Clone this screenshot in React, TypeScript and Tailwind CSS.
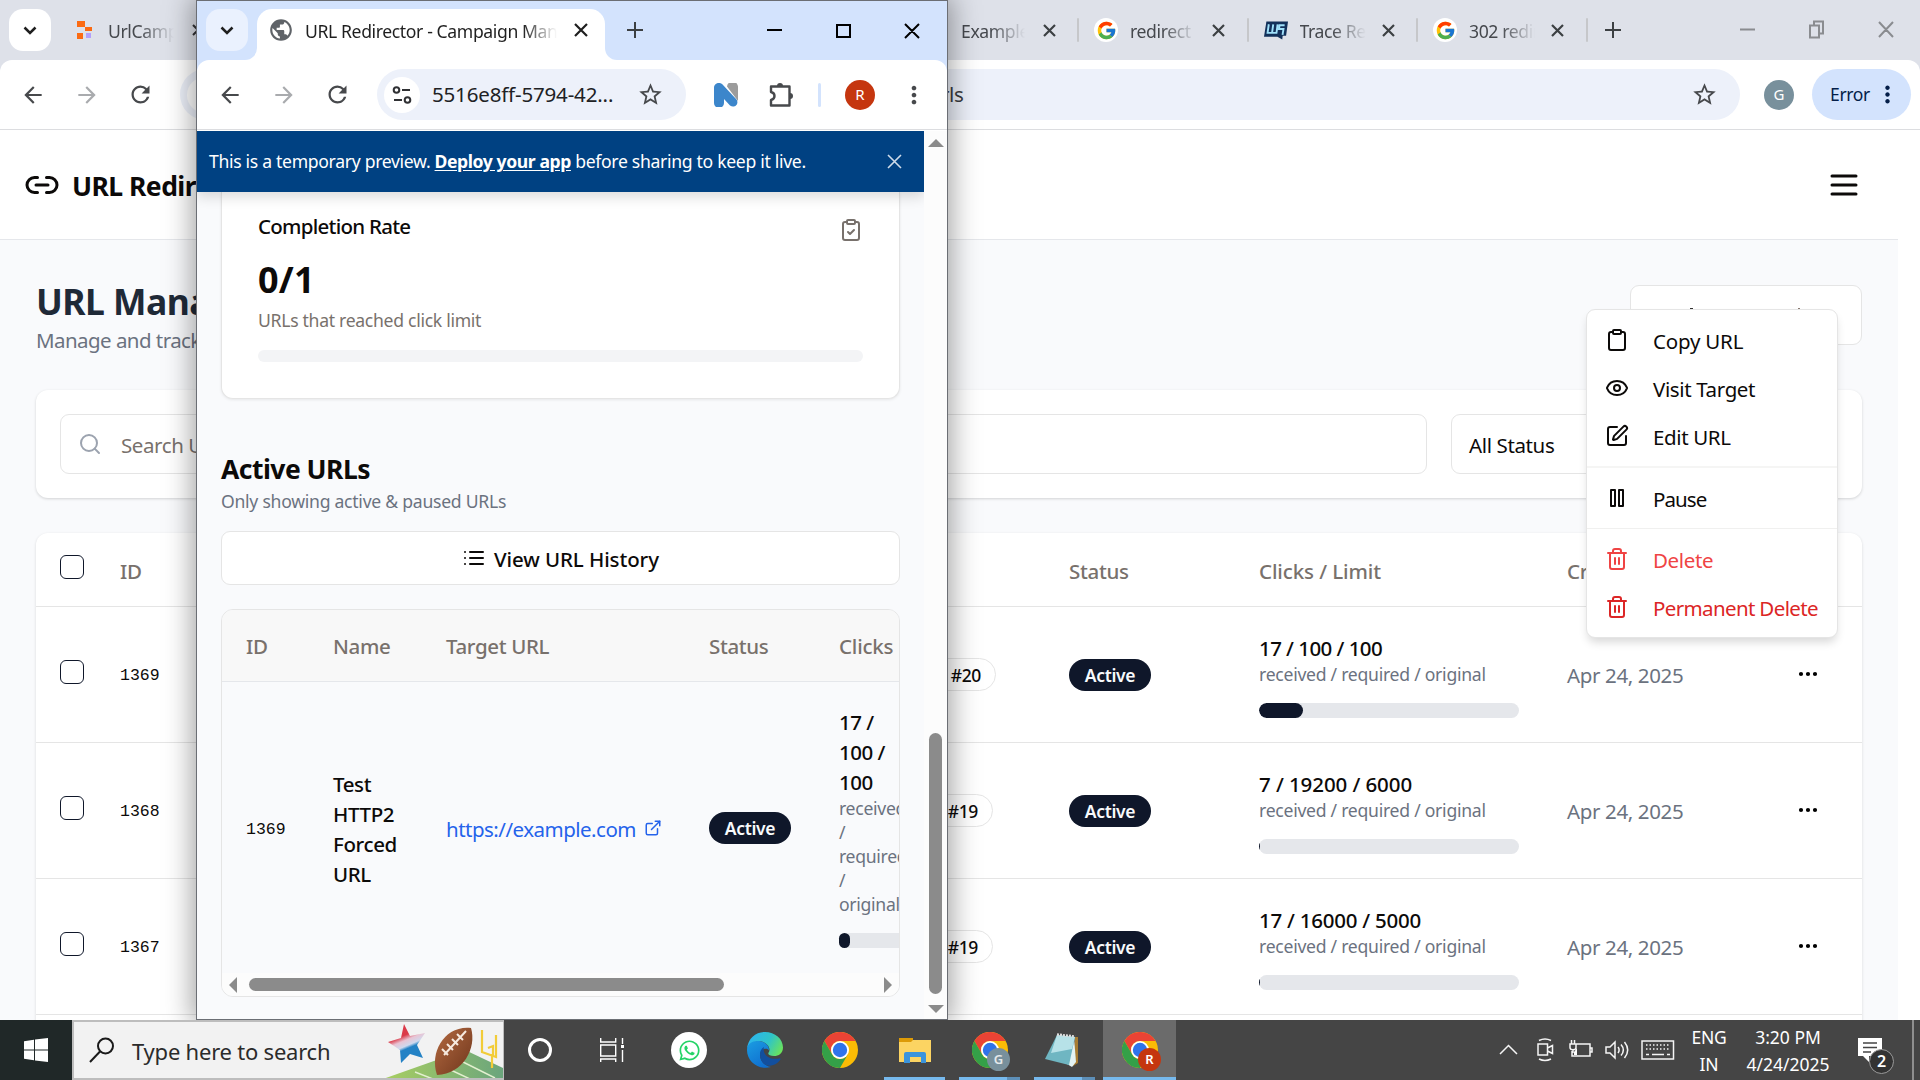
import React from 'react';
import { Clipboard, ClipboardCheck, Ellipsis, ExternalLink, Eye, Link2, Search, SquarePen, Trash2 } from 'lucide-react';
import { FcGoogle } from 'react-icons/fc';
import { FaWhatsapp } from 'react-icons/fa';
import { MdArrowBack, MdArrowForward, MdMoreVert, MdPublic, MdRefresh, MdStarBorder } from 'react-icons/md';

const TABS = [
  { title: 'redirect', icon: 'google' },
  { title: 'Trace Re', icon: 'trace' },
  { title: '302 redir', icon: 'google' },
];

const ROWS = [
  { id: '1369', tag: '#20', tagWidth: 'w-[66px]', clicks: '17 / 100 / 100', tracking: 'tracking-[-0.027em]', fill: 'rounded-full', pct: 17 },
  { id: '1368', tag: '#19', tagWidth: 'w-[63px]', clicks: '7 / 19200 / 6000', tracking: 'tracking-[-0.004em]', fill: '', pct: 0.4 },
  { id: '1367', tag: '#19', tagWidth: 'w-[63px]', clicks: '17 / 16000 / 5000', tracking: 'tracking-[-0.012em]', fill: '', pct: 0.4 },
];

function Cross({ size = 12, stroke = 2, className = '' }: { size?: number; stroke?: number; className?: string }) {
  return (
    <svg width={size} height={size} viewBox={`0 0 ${size} ${size}`} stroke="currentColor" strokeWidth={stroke} className={`shrink-0 ${className}`}>
      <path d={`M1 1L${size - 1} ${size - 1}M${size - 1} 1L1 ${size - 1}`} />
    </svg>
  );
}

function Plus({ className = '' }: { className?: string }) {
  return (
    <svg width="16" height="16" stroke="#3c4043" strokeWidth="2" className={className}>
      <path d="M8 0v16M0 8h16" />
    </svg>
  );
}

function Chevron() {
  return (
    <svg width="14" height="9" fill="none" stroke="#1f1f1f" strokeWidth="2.500">
      <path d="M1.500 1.500L7 7l5.500-5.500" />
    </svg>
  );
}

function TabTitle({ children, className }: { children: React.ReactNode; className: string }) {
  return (
    <span className={`block shrink-0 overflow-hidden whitespace-nowrap text-[17.6px] leading-6 tracking-[-0.022em] [mask-image:linear-gradient(to_right,black_calc(100%-34px),transparent)] ${className}`}>
      {children}
    </span>
  );
}

function TuneIcon() {
  return (
    <svg width="20" height="20" fill="none" stroke="#303134" strokeWidth="2">
      <circle cx="4.500" cy="5" r="2.800" />
      <path d="M10 5h8M2 15h8" />
      <circle cx="15.500" cy="15" r="2.800" />
    </svg>
  );
}

function NavIcons() {
  return (
    <>
      <MdArrowBack size={26} className="text-[#47494c]" />
      <MdArrowForward size={26} className="ml-[28px] text-[#a9abae]" />
      <MdRefresh size={27} className="ml-[27px] text-[#47494c]" />
    </>
  );
}

function PuzzleIcon() {
  return (
    <svg width="26" height="26" fill="none" stroke="#47494c" strokeWidth="2.400" strokeLinejoin="round">
      <path d="M3 4.500h18.500v19H3v-5.500c2-.5 3.500-2 3.500-4s-1.500-3.500-3.500-4z" />
      <path d="M9 4a3 3 0 0 1 6 0zM22 11a3 3 0 0 1 0 6z" fill="#47494c" stroke="none" />
    </svg>
  );
}

function TraceIcon() {
  return (
    <svg width="25" height="19" viewBox="0 0 25 19">
      <path d="M2.500 0H25l-2 15h-3.500l-.5 4-5-3H0z" fill="#12305a" />
      <path d="M5 3l-1.300 9H13l1.200-9M9.600 3l-1.200 9M21.500 4h-5.300l-.6 4h4.700l-1 6" fill="none" stroke="#9fe0fa" strokeWidth="2" />
    </svg>
  );
}

function ActiveBadge() {
  return (
    <span className="flex h-8 w-[82px] items-center justify-center rounded-full bg-[#0f172a] pt-px text-[17.500px] font-semibold tracking-[-0.02em] text-[#f8fafc]">
      Active
    </span>
  );
}

function Checkbox() {
  return <span className="-mt-[5px] block size-6 rounded-[6px] border-[1.500px] border-[#0f172a]" />;
}

/* ---------- Background browser window ---------- */

function BackgroundChrome() {
  return (
    <div className="shrink-0 bg-[#dee1e9]">
      <div className="flex h-[60px] items-center">
        <div className="ml-[9px] flex h-[42px] w-[42px] items-center justify-center rounded-[14px] bg-white">
          <Chevron />
        </div>
        <svg width="15" height="19" className="ml-[26px] shrink-0">
          <path d="M0 0h8v6H0zM8 6h7v4H8zM0 12h6v6H0z" fill="#fb6a12" />
          <path d="M9 12h5v5H9z" fill="#b3a0fa" />
        </svg>
        <TabTitle className="ml-4 mt-[2px] w-[66px] text-[#45484d]">UrlCampaign</TabTitle>
        <Cross className="ml-[18px] text-[#303134]" />
        <div className="w-[757px]" />
        <TabTitle className="mt-[2px] w-[64px] text-[#45484d]">Example D</TabTitle>
        <Cross size={13} stroke={2.200} className="ml-[18px] text-[#3c4043]" />
        {TABS.map((tab) => (
          <div key={tab.title} className="flex w-[169.500px] shrink-0 items-center">
            <span className="ml-[21px] h-6 w-[2px] rounded-full bg-[#c6c7ca]" />
            {tab.icon === 'google' ? (
              <span className="ml-[15px] flex size-6 shrink-0 items-center justify-center rounded-full bg-white">
                <FcGoogle size={21} />
              </span>
            ) : (
              <span className="ml-[15px] flex w-6"><TraceIcon /></span>
            )}
            <TabTitle className="ml-[12px] mt-[2px] w-[66px] text-[#45484d]">{tab.title}</TabTitle>
            <Cross size={13} stroke={2.200} className="ml-[16px] text-[#3c4043]" />
          </div>
        ))}
        <span className="ml-[21px] h-6 w-[2px] rounded-full bg-[#c6c7ca]" />
        <Plus className="ml-[17px]" />
        <svg width="160" height="20" fill="none" stroke="#8a8c90" strokeWidth="2" className="ml-auto mr-[24px] shrink-0">
          <path d="M4 9.500h15M74 5.500h9v12h-9zM78 5V1.500h9v12h-3.500M143 2l14 15M157 2l-14 15" />
        </svg>
      </div>
      <div className="flex h-[70px] items-center rounded-t-[12px] border-b border-[#dcdde0] bg-white pl-5 pr-[9px]">
        <NavIcons />
        <div className="ml-[26px] flex h-[51px] w-[1560px] shrink-0 items-center rounded-full bg-[#edf1fa] px-[7px]">
          <span className="size-9 rounded-full bg-white" />
          <span className="ml-[718px] text-[20.500px] tracking-[-0.02em] text-[#3a3c40]">rls</span>
          <MdStarBorder size={27} className="ml-auto mr-[15px] text-[#47494c]" />
        </div>
        <span className="ml-6 flex size-[30px] items-center justify-center rounded-full bg-[#78909c] text-[15px] text-white">G</span>
        <div className="ml-auto flex h-[51px] w-[99px] items-center rounded-full bg-[#d3e3fd] pl-[18px] text-[#041e49]">
          <span className="text-[17.500px] tracking-[-0.02em]">Error</span>
          <MdMoreVert size={27} className="ml-[4px]" />
        </div>
      </div>
    </div>
  );
}

function UrlTable() {
  return (
    <section className="mt-[35px] h-[600px] rounded-[12px] bg-white shadow-[0_1px_3px_rgba(0,0,0,0.14)]">
      <div className="grid h-[74px] grid-cols-[60px_949px_190px_308px_231px_60px] items-center border-b border-[#e5e5e5] pl-6 text-[20.500px] font-medium tracking-[-0.015em] text-[#78716c]">
        <Checkbox />
        <span className="pt-[4px]">ID</span>
        <span className="pt-[4px]">Status</span>
        <span className="pt-[4px] tracking-[-0.005em]">Clicks / Limit</span>
        <span className="pt-[4px]">Created</span>
      </div>
      {ROWS.map((row) => (
        <div key={row.id} className="grid h-[136px] grid-cols-[60px_810px_139px_190px_308px_231px_60px] items-center border-b border-[#e5e5e5] pl-6">
          <Checkbox />
          <span className="pt-[3px] font-['Liberation_Mono',monospace] text-[16.500px] text-[#0c0a09]">{row.id}</span>
          <span className={`flex h-[33px] items-center justify-end rounded-full border border-[#e5e5e5] pr-[14px] pt-px text-[17.500px] font-medium tracking-[-0.02em] text-[#0c0a09] ${row.tagWidth}`}>
            {row.tag}
          </span>
          <ActiveBadge />
          <div className="pt-[3px] text-[#0c0a09]">
            <div className={`-mt-[2px] text-[20.500px] font-medium leading-[30px] ${row.tracking}`}>{row.clicks}</div>
            <div className="-mt-[1px] text-[17.600px] leading-6 tracking-[-0.015em] text-[#6b7280]">received / required / original</div>
            <div className="mt-[17px] h-[15px] w-[260px] overflow-hidden rounded-full bg-[#e5e7eb]">
              <div className={`h-full min-w-px bg-[#0f172a] ${row.fill}`} style={{ width: `${row.pct}%` }} />
            </div>
          </div>
          <span className="pt-[2px] text-[20.500px] tracking-[-0.018em] text-[#6b7280]">Apr 24, 2025</span>
          <Ellipsis size={24} strokeWidth={2.200} className="-ml-[2px] -mt-[2px]" />
        </div>
      ))}
    </section>
  );
}

function BackgroundPage() {
  return (
    <div className="flex min-h-0 grow flex-col bg-white">
      <header className="flex h-[109px] w-full shrink-0 items-center pl-6 pr-[58px]">
        <Link2 size={36} className="mt-px text-[#0c0a09]" />
        <span className="ml-3 mt-[5px] whitespace-nowrap text-[26.500px] font-bold tracking-[-0.02em] text-[#0c0a09]">URL Redirector</span>
        <svg width="36" height="36" viewBox="0 0 24 24" stroke="#0c0a09" strokeWidth="2" strokeLinecap="round" className="ml-auto mt-px">
          <path d="M4 6h16M4 12h16M4 18h16" />
        </svg>
      </header>
      <main className="w-[1898px] grow overflow-hidden border-t border-[#e5e7eb] bg-[#f9fafc] pl-9 pr-9 pt-[45px]">
        <div className="flex h-[70px] justify-between">
          <div>
            <h1 className="-mt-1 text-[35.500px] font-bold leading-10 tracking-[-0.015em] text-[#1f2937]">URL Management</h1>
            <p className="mt-[4px] text-[20.500px] leading-[30px] tracking-[-0.027em] text-[#6b7280]">Manage and track all your redirect URLs</p>
          </div>
          <div className="h-[60px] w-[232px] rounded-[9px] border border-[#e5e5e5] bg-white">
            <div className="mt-[22px] flex justify-between pl-[59px] pr-[61px]">
              <span className="h-[2px] w-[3px] bg-[#333]" />
              <span className="h-[2px] w-[2px] bg-[#8a7a70]" />
            </div>
          </div>
        </div>
        <section className="mt-[35px] flex h-[108px] items-center gap-[24px] rounded-[12px] bg-white px-6 shadow-[0_1px_3px_rgba(0,0,0,0.16)]">
          <div className="flex h-[60px] w-[1367px] items-center rounded-[9px] border border-[#e5e5e5] pl-[17px] text-[20.500px] tracking-[-0.02em] text-[#78716c]">
            <Search size={24} className="text-[#9ca3af]" />
            <span className="ml-[19px] mt-[2px]">Search URLs...</span>
          </div>
          <div className="flex h-[60px] grow items-center rounded-[9px] border border-[#e5e5e5] pl-[17px] pt-[2px] text-[20.500px] tracking-[-0.018em] text-[#0c0a09]">
            All Status
          </div>
        </section>
        <UrlTable />
      </main>
    </div>
  );
}

function MenuItem({ icon, label, className = 'text-[#0c0a09]' }: { icon: React.ReactNode; label: string; className?: string }) {
  return (
    <div className={`flex h-12 items-center gap-6 whitespace-nowrap pl-[18px] ${className}`}>
      {icon}
      <span className="pt-[3px]">{label}</span>
    </div>
  );
}

function ActionsMenu() {
  return (
    <div className="absolute left-[1586px] top-[309px] w-[252px] rounded-[9px] border border-[#e5e5e5] bg-white py-[6px] text-[20.500px] tracking-[-0.018em] shadow-[0_6px_10px_-2px_rgba(0,0,0,0.16)]">
      <MenuItem icon={<Clipboard size={24} />} label="Copy URL" className="tracking-[-0.01em] text-[#0c0a09]" />
      <MenuItem icon={<Eye size={24} />} label="Visit Target" />
      <MenuItem icon={<SquarePen size={24} />} label="Edit URL" />
      <div className="my-[6px] h-[2px] bg-[#f5f5f4]" />
      <MenuItem
        icon={
          <svg width="24" height="24" fill="none" stroke="currentColor" strokeWidth="2" strokeLinejoin="round">
            <path d="M6 4h4v16H6zM14 4h4v16h-4z" />
          </svg>
        }
        label="Pause"
        className="tracking-[-0.045em] text-[#0c0a09]"
      />
      <div className="my-[6px] h-px bg-[#f0f0ef]" />
      <MenuItem icon={<Trash2 size={24} />} label="Delete" className="text-[#ef4444]" />
      <MenuItem icon={<Trash2 size={24} />} label="Permanent Delete" className="tracking-[-0.031em] text-[#dc2626]" />
    </div>
  );
}

/* ---------- Foreground browser window ---------- */

function FrontChrome() {
  return (
    <div className="shrink-0 bg-[#d3e3fd]">
      <div className="flex h-[59px] items-end">
        <div className="mb-[9px] ml-[9px] flex h-[42px] w-[42px] items-center justify-center rounded-[14px] bg-[#eaf1fe]">
          <Chevron />
        </div>
        <div className="-ml-[3px] size-3 bg-white"><div className="size-full rounded-br-full bg-[#d3e3fd]" /></div>
        <div className="flex h-[51px] w-[348px] items-center rounded-t-[15px] bg-white pb-[9px] pl-[11px]">
          <MdPublic size={26} className="text-[#5f6368]" />
          <TabTitle className="ml-[11px] mt-[2px] w-[252px] text-[#1f1f1f]">URL Redirector - Campaign Manager</TabTitle>
          <Cross size={14} stroke={2.200} className="ml-[17px] text-[#1f1f1f]" />
        </div>
        <div className="size-3 bg-white"><div className="size-full rounded-bl-full bg-[#d3e3fd]" /></div>
        <Plus className="mb-[22px] ml-[10px]" />
        <svg width="160" height="20" fill="none" stroke="#000" strokeWidth="2" className="mb-[19px] ml-auto mr-[22px]">
          <path d="M2 9h15M72 4h13v12H72zM140 3l14 14M154 3l-14 14" />
        </svg>
      </div>
      <div className="flex h-[70px] items-center rounded-t-[12px] border-b border-[#dcdde0] bg-white pl-[20px]">
        <NavIcons />
        <div className="ml-[26px] flex h-[51px] w-[309px] items-center rounded-full bg-[#edf1fa] pl-[7px]">
          <span className="flex size-9 items-center justify-center rounded-full bg-white"><TuneIcon /></span>
          <span className="ml-[12px] whitespace-nowrap text-[20.500px] tracking-[-0.008em] text-[#202124]">5516e8ff-5794-42...</span>
          <MdStarBorder size={27} className="ml-auto mr-[22px] text-[#47494c]" />
        </div>
        <svg width="24" height="24" viewBox="0 0 24 24" className="ml-[28px]">
          <path d="M13 3.500a4.800 4.800 0 0 1 11 1V18z" fill="#9c9c9c" />
          <path d="M0 4.800C0 0 6-1.500 9 2l13.500 14.500c3 4-2 9.500-6.500 6L10 16v4a5 5 0 0 1-10 0z" fill="#3c86cb" />
        </svg>
        <span className="ml-[30px] flex"><PuzzleIcon /></span>
        <span className="ml-[24px] h-6 w-[3px] rounded bg-[#d3e3fd]" />
        <span className="ml-[24px] flex size-[30px] items-center justify-center rounded-full bg-[#c5360f] text-[15px] text-white">R</span>
        <MdMoreVert size={28} className="ml-[25px] text-[#47494c]" />
      </div>
    </div>
  );
}

function PreviewBanner() {
  return (
    <div className="relative z-10 flex h-[61px] shrink-0 items-center justify-between bg-[#004182] pl-3 pr-[22px] text-[17.600px] tracking-[-0.018em] text-white shadow-[0_5px_12px_rgba(0,0,0,0.14)]">
      <span className="whitespace-nowrap">
        This is a temporary preview. <b className="tracking-[-0.024em] underline underline-offset-2">Deploy your app</b> before sharing to keep it live.
      </span>
      <Cross size={15} stroke={1.600} className="text-[#cfdcea]" />
    </div>
  );
}

function CompletionCard() {
  return (
    <div className="h-[207px] shrink-0 rounded-b-[12px] border border-t-0 border-[#e5e5e5] bg-white px-9 pt-[19px] shadow-[0_1px_3px_rgba(0,0,0,0.08)]">
      <div className="flex justify-between">
        <span className="text-[20.500px] font-medium leading-[30px] tracking-[-0.036em] text-[#0c0a09]">Completion Rate</span>
        <ClipboardCheck size={24} className="mt-[7px] text-[#78716c]" />
      </div>
      <div className="mt-[14px] text-[36px] font-bold leading-[48px] tracking-[0.005em] text-[#0c0a09]">0/1</div>
      <div className="mt-[4px] text-[17.600px] leading-6 tracking-[-0.017em] text-[#78716c]">URLs that reached click limit</div>
      <div className="mt-[18px] h-3 rounded-full bg-[#f3f4f6]" />
    </div>
  );
}

function ActiveUrlsTable() {
  return (
    <div className="mt-6 flex h-[388px] shrink-0 flex-col overflow-hidden rounded-[12px] border border-[#e5e5e5]">
      <div className="grid h-[72px] shrink-0 grid-cols-[87px_112px_264px_130px_100px] items-center border-b border-[#e5e7eb] bg-[#f8f8f8] pl-6 pt-px text-[20.500px] font-medium tracking-[-0.018em] text-[#78716c]">
        <span>ID</span>
        <span>Name</span>
        <span className="pl-px">Target URL</span>
        <span>Status</span>
        <span className="tracking-[-0.01em]">Clicks</span>
      </div>
      <div className="grid grow grid-cols-[87px_112px_264px_130px_180px] items-center pl-6 text-[20.500px] tracking-[-0.025em] text-[#0c0a09]">
        <span className="pt-[5px] font-['Liberation_Mono',monospace] text-[16.500px] tracking-normal">1369</span>
        <span className="w-[70px] pt-[2px] font-medium leading-[30px] tracking-[-0.018em]">Test HTTP2 Forced URL</span>
        <span className="flex items-center gap-2 pl-px pt-[4px] tracking-[-0.025em] text-[#2563eb]">
          https://example.com
          <ExternalLink size={18} className="-mt-[4px]" />
        </span>
        <ActiveBadge />
        <div className="pt-px">
          <div className="-mt-px w-[56px] font-medium leading-[30px]">17 / 100 / 100</div>
          <div className="-mt-px w-[68px] text-[17.600px] leading-6 tracking-[-0.017em] text-[#6b7280]">received / required / original</div>
          <div className="mt-[17px] h-[15px] w-[180px] rounded-full bg-[#e5e7eb]">
            <div className="h-full w-[11px] rounded-full bg-[#0f172a]" />
          </div>
        </div>
      </div>
      <div className="flex h-[23px] shrink-0 items-center bg-[#fcfcfc] pl-[7px] pr-[7px]">
        <svg width="8" height="16" fill="#8b8b8b"><path d="M8 0v16L0 8z" /></svg>
        <div className="ml-3 h-[13px] w-[475px] rounded-full bg-[#8b8b8b]" />
        <svg width="8" height="16" fill="#8b8b8b" className="ml-auto"><path d="M0 0v16l8-8z" /></svg>
      </div>
    </div>
  );
}

function FrontWindow() {
  return (
    <div className="absolute left-[196px] top-0 flex h-[1020px] w-[752px] flex-col border border-[#6b6e74] bg-white shadow-[0_0_26px_4px_rgba(0,0,0,0.36)]">
      <FrontChrome />
      <div className="mt-px flex min-h-0 grow">
        <div className="flex w-[727px] flex-col overflow-hidden bg-[#f9fafc]">
          <PreviewBanner />
          <div className="flex grow flex-col px-6">
            <CompletionCard />
            <h2 className="mt-[50px] text-[26.500px] font-bold leading-10 tracking-[-0.02em] text-[#0c0a09]">Active URLs</h2>
            <p className="text-[17.600px] leading-6 tracking-[-0.015em] text-[#6b7280]">Only showing active &amp; paused URLs</p>
            <div className="mt-[18px] flex h-[54px] shrink-0 items-center justify-center gap-2 rounded-[9px] border border-[#e5e5e5] bg-white text-[20.500px] font-medium tracking-[-0.005em] text-[#0c0a09]">
              <svg width="24" height="24" stroke="currentColor" strokeWidth="2" strokeLinecap="round">
                <path d="M3 6h.01M3 12h.01M3 18h.01M8 6h13M8 12h13M8 18h13" />
              </svg>
              <span className="pt-[2px]">View URL History</span>
            </div>
            <ActiveUrlsTable />
          </div>
        </div>
        <div className="flex grow flex-col items-center bg-[#fcfcfc] pb-[6px] pt-[8px]">
          <svg width="16" height="8" fill="#8b8b8b"><path d="M0 8h16L8 0z" /></svg>
          <div className="mt-auto h-[261px] w-[13px] rounded-full bg-[#8b8b8b]" />
          <svg width="16" height="8" fill="#8b8b8b" className="mt-[11px] shrink-0"><path d="M0 0h16L8 8z" /></svg>
        </div>
      </div>
    </div>
  );
}

/* ---------- Taskbar ---------- */

function ChromeLogo() {
  return (
    <svg width="36" height="36" viewBox="0 0 36 36">
      <circle cx="18" cy="18" r="18" fill="#fbbc05" />
      <path d="M2.400 9A18 18 0 0 1 33.600 9H18a9 9 0 0 0-7.800 13.500z" fill="#ea4335" />
      <path d="M2.400 9A18 18 0 0 0 18 36l7.800-13.500a9 9 0 0 1-15.600 0z" fill="#34a048" />
      <circle cx="18" cy="18" r="9" fill="#fff" />
      <circle cx="18" cy="18" r="7.200" fill="#2f73ea" />
    </svg>
  );
}

function EdgeLogo() {
  return (
    <svg width="36" height="36" viewBox="0 0 36 36">
      <defs>
        <linearGradient id="edgeTop" x1="0" y1="0.300" x2="1" y2="0.700">
          <stop offset="0" stopColor="#2cb4f0" />
          <stop offset="0.550" stopColor="#2fc4c8" />
          <stop offset="1" stopColor="#6be35a" />
        </linearGradient>
        <linearGradient id="edgeLeft" x1="0" y1="0" x2="0.600" y2="1">
          <stop offset="0" stopColor="#1b9de2" />
          <stop offset="1" stopColor="#0f6fd0" />
        </linearGradient>
      </defs>
      <path d="M0 17C1 6 9 0 18 0c10 0 18 7 18 15.500 0 6-4.500 8.500-9 8.500-4 0-6.500-1.600-5.500-3.200C25 16 19 8 10 9.500 5 10.300 1.500 13 0 17z" fill="url(#edgeTop)" />
      <path d="M0 18C0 12 5 9 10.500 9c7 0 12 4.500 11.500 9.500C21 15.500 13 16 13 23c0 7 6 11.500 11 12C12 38.500 0 30 0 18z" fill="url(#edgeLeft)" />
      <path d="M13 22c0-3 1.500-5.500 4-7-2 7 5 13.500 15 11.500 1.500-.5 2 .5 1 1.700C27 36.500 13 36 13 22z" fill="#124f9e" />
    </svg>
  );
}

function SearchArt() {
  return (
    <svg width="120" height="56" viewBox="0 0 120 56" className="ml-auto shrink-0">
      <defs>
        <linearGradient id="field" x1="0" y1="0" x2="1" y2="0">
          <stop offset="0" stopColor="#a9cf62" />
          <stop offset="1" stopColor="#6ba57c" />
        </linearGradient>
        <linearGradient id="ball" x1="0" y1="0" x2="1" y2="1">
          <stop offset="0" stopColor="#b46a41" />
          <stop offset="1" stopColor="#6f361c" />
        </linearGradient>
        <linearGradient id="star" x1="0.300" y1="0" x2="0.700" y2="1">
          <stop offset="0.300" stopColor="#db3a49" />
          <stop offset="0.420" stopColor="#e8c4d4" />
          <stop offset="0.550" stopColor="#cfd9ee" />
          <stop offset="0.620" stopColor="#2482c5" />
        </linearGradient>
      </defs>
      <path d="M0 57L82 28l38 18v11z" fill="url(#field)" />
      <path d="M32 50l18 7M55 42l32 15M72 36l40 20" stroke="#e2efcf" strokeWidth="1.500" />
      <path d="M21 2l6 12 15-3-8 12 6 13-13-4-9 9-1-13-12-8 13-4z" fill="url(#star)" />
      <path d="M88 6c6 20-8 46-34 47C46 30 62 3 88 6z" fill="url(#ball)" />
      <path d="M61 33L83 9M59 27l6 6M64 22l6 6M69 17l6 6M74 12l6 6" stroke="#f6e9de" strokeWidth="2" />
      <path d="M99 8v22l14 5V13M109 32v14M105 26l5-2v10" fill="none" stroke="#f2cc38" strokeWidth="2.200" />
    </svg>
  );
}

function AppSlot({ children, className = 'w-[75px]' }: { children?: React.ReactNode; className?: string }) {
  return <div className={`relative flex h-[60px] shrink-0 items-center justify-center ${className}`}>{children}</div>;
}

function Underline({ split }: { split?: boolean }) {
  return (
    <span className="absolute bottom-0 left-[7px] flex h-[3px] w-[61px] bg-[#76b9ed]">
      {split && <span className="ml-auto w-[13px] bg-[#5d8fb8]" />}
    </span>
  );
}

function ProfileBadge({ letter, className }: { letter: string; className: string }) {
  return (
    <span className={`absolute left-[35px] top-[28px] flex size-[23px] items-center justify-center rounded-full text-[13px] font-semibold ${className}`}>
      {letter}
    </span>
  );
}

function Taskbar() {
  return (
    <footer className="absolute bottom-0 left-0 flex h-[60px] w-[1920px] items-center overflow-hidden bg-[#454545] text-white">
      <div className="flex h-full w-[72px] shrink-0 items-center justify-center bg-[#202828]">
        <svg width="24" height="24" fill="#fff">
          <path d="M0 3.200L10 1.800v9.700H0zM11 1.600L24 0v11.500H11zM0 12.500h10v9.700L0 20.800zM11 12.500h13V24l-13-1.600z" />
        </svg>
      </div>
      <div className="flex h-full w-[432px] shrink-0 items-center border-2 border-r-[1px] border-[#bdbdbd] bg-[#f2f2f2] text-[#2b2b2b]">
        <svg width="26" height="26" fill="none" stroke="#1a1a1a" strokeWidth="2" className="ml-[15px]">
          <circle cx="16.500" cy="9" r="7.500" />
          <path d="M11 14.500L1 25" />
        </svg>
        <span className="ml-[17px] mt-[2px] whitespace-nowrap text-[22px] tracking-[-0.01em]">Type here to search</span>
        <SearchArt />
      </div>
      <AppSlot className="w-[71px]">
        <span className="size-6 rounded-full border-[3.500px] border-white" />
      </AppSlot>
      <AppSlot className="w-[77px]">
        <svg width="25" height="24" fill="none" stroke="#fff" strokeWidth="1.400" className="-ml-[2px]">
          <path d="M.7 0v4h15V0M.7 7h15v11H.7zM.7 24v-3h15v3M22.500 0v6M22.500 12v12" />
          <path d="M21 7h3v3h-3z" fill="#fff" stroke="none" />
        </svg>
      </AppSlot>
      <AppSlot>
        <span className="-ml-px flex size-9 items-center justify-center rounded-full bg-white">
          <FaWhatsapp size={23} className="text-[#25d366]" />
        </span>
      </AppSlot>
      <AppSlot><EdgeLogo /></AppSlot>
      <AppSlot><ChromeLogo /></AppSlot>
      <AppSlot>
        <svg width="32" height="27" viewBox="0 0 32 27">
          <path d="M0 1h14v6H0z" fill="#dd9b07" />
          <path d="M0 5h12l2-2h18v22H0z" fill="#fcd462" />
          <path d="M5 26V17a2 2 0 0 1 2-2h18a2 2 0 0 1 2 2v9h-5v-6H11v6z" fill="#3b94dc" />
        </svg>
        <Underline />
      </AppSlot>
      <AppSlot>
        <ChromeLogo />
        <ProfileBadge letter="G" className="bg-[#78909c] text-white/80" />
        <Underline split />
      </AppSlot>
      <AppSlot className="w-[76px]">
        <svg width="34" height="34" viewBox="0 0 34 34" className="-ml-[6px]">
          <path d="M30 4h3v26l-5 3z" fill="#a87d33" />
          <path d="M29 4l2 25-4 5-5-3z" fill="#e3f3f4" />
          <path d="M12 2l18 2-6 28L0 26z" fill="#6fb6c2" />
          <path d="M12 2l18 2-3 12L6 20z" fill="#b7e2e8" />
          <path d="M12 1.500l18 2" stroke="#ddd" strokeWidth="2.500" strokeDasharray="2 1" />
        </svg>
        <Underline split />
      </AppSlot>
      <AppSlot className="w-[73px] bg-[#6b6b6b]">
        <ChromeLogo />
        <ProfileBadge letter="R" className="bg-[#c5360f] text-white" />
        <span className="absolute bottom-0 left-0 h-[3px] w-full bg-[#76b9ed]" />
      </AppSlot>
      <div className="ml-auto flex h-full shrink-0 items-center">
        <svg width="176" height="24" fill="none" stroke="#f5f5f5" strokeWidth="1.500">
          <path d="M1 16l8.500-8.500L18 16" />
          <path d="M39 6h9.500v11H39zM48.500 10l5-2.500v8l-5-2.500M40 2.500c4-2 8-2 12 0M40 21c4 2 8 2 12 0" />
          <path d="M77 6h14v12H73v-5M91 10h2v4h-2M71 6v3.500c0 3 6 3 6 0V6zM72.500 6V2M75.500 6V2M74 12v3" />
          <path d="M75 17v-3l3-4v7z" fill="#fff" stroke="none" />
          <path d="M107 9v6h4l5 5V4l-5 5zM119 9c1.500 2 1.500 4 0 6M122 6.500c3 3.500 3 7.500 0 11M125.500 4c4 5 4 11 0 16" />
          <path d="M143 3h31.500v18H143z" />
          <path d="M147 7h24M147 11h24" strokeDasharray="1.500 2" />
          <path d="M147 16.500h3M153 16.500h12M168 16.500h3" />
        </svg>
        <div className="ml-[16px] flex w-9 flex-col items-center pt-[2px] text-[17.500px] leading-[27px] tracking-[-0.01em]">
          <span>ENG</span>
          <span>IN</span>
        </div>
        <div className="ml-[19px] flex w-[84px] flex-col items-center whitespace-nowrap pt-px text-[17.500px] leading-[27px]">
          <span>3:20 PM</span>
          <span>4/24/2025</span>
        </div>
        <div className="relative ml-[28px] mr-[30px] mt-[-1px]">
          <svg width="24" height="24">
            <path d="M0 0h24v18H11v6l-6-6H0z" fill="#fff" />
            <path d="M5 5h14M5 9.500h14M5 14h8" stroke="#454545" strokeWidth="1.300" />
          </svg>
          <span className="absolute left-[11px] top-[11px] flex size-[25px] items-center justify-center rounded-full border border-[#9a9a9a] bg-[#333] text-[16px] font-semibold">2</span>
        </div>
        <div className="h-full w-[8px] border-l-2 border-[#8f8f8f]" />
      </div>
    </footer>
  );
}

export default function App() {
  return (
    <div className="relative flex h-[1080px] w-[1920px] flex-col overflow-hidden bg-white font-['Noto_Sans',sans-serif]">
      <div className="flex h-[1020px] flex-col overflow-hidden">
        <BackgroundChrome />
        <BackgroundPage />
      </div>
      <ActionsMenu />
      <FrontWindow />
      <Taskbar />
    </div>
  );
}
